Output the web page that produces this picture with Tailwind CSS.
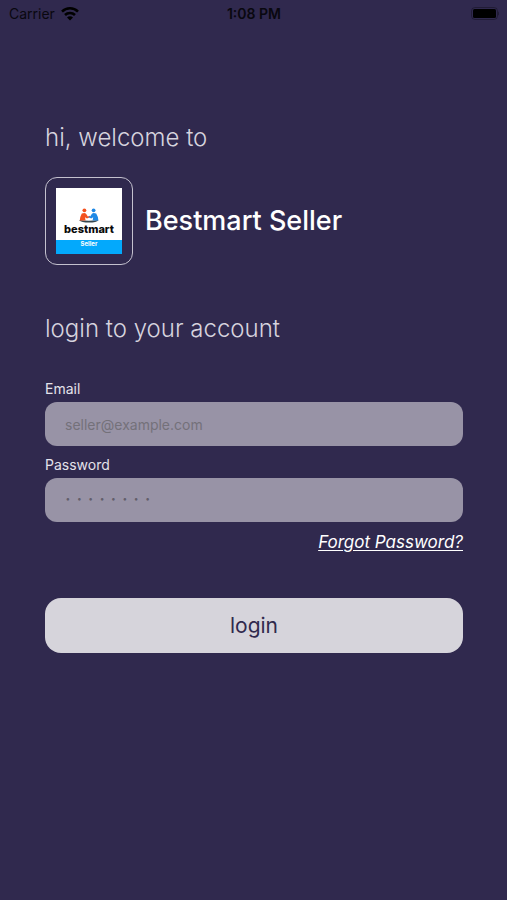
<!DOCTYPE html>
<html lang="en">
<head>
    <meta charset="UTF-8">
    <meta name="viewport" content="width=device-width, initial-scale=1.0">
    <title>Login - Bestmart Seller</title>
    <script src="https://cdn.jsdelivr.net/npm/@tailwindcss/browser@4"></script>
</head>
<body class="bg-[#30294e] min-h-screen font-['Inter',sans-serif]">
    <!-- Status bar -->
    <header class="grid grid-cols-3 items-center h-7 pl-[9px] pr-2 text-sm text-black">
        <div class="flex items-center gap-[6px]">
            <span class="opacity-80">Carrier</span>
            <svg class="w-[18px] h-[14px]" viewBox="0 0 18 14" fill="none" stroke="currentColor" stroke-width="2.6" aria-hidden="true">
                <path d="M1 4.6a11.4 11.4 0 0 1 16 0" />
                <path d="M4 8a7.2 7.2 0 0 1 10 0" />
                <path d="M9 13.4 6 10.4a4.2 4.2 0 0 1 6 0z" fill="currentColor" stroke="none" />
            </svg>
        </div>
        <span class="text-center font-semibold opacity-80">1:08 PM</span>
        <svg class="w-7 h-[14px] justify-self-end" viewBox="0 0 28 14" aria-hidden="true">
            <rect x="0.5" y="0.5" width="26" height="12" rx="3.5" fill="none" stroke="#000" stroke-opacity="0.3" />
            <rect x="2" y="2" width="23" height="9" rx="1.5" fill="#000" />
            <path d="M27 4.5a2.2 2.2 0 0 1 0 4z" fill="#000" fill-opacity="0.3" />
        </svg>
    </header>

    <main class="pl-[45px] pr-11 pt-[94px]">
        <p class="text-2xl font-light text-[#d6d3de]">hi, welcome to</p>

        <div class="flex items-center gap-3 mt-[23px]">
            <div class="size-[88px] shrink-0 p-[10px] border border-[#c4c1ce] rounded-xl">
                <svg class="size-[66px]" viewBox="0 0 66 66" role="img" aria-label="Bestmart Seller logo">
                    <rect width="66" height="66" fill="#fff" />
                    <rect y="52" width="66" height="14" fill="#03a9fc" />
                    <path d="M23 32q10 1.500 19.500 0-2 2.600-9.500 2.600T23 32z" fill="#37474f" />
                    <circle cx="28.400" cy="22.300" r="1.900" fill="#f4511e" />
                    <path d="M25.800 25.600q3-1.600 4.400.4l1.600 2.400 2.200-.6.400 1.200-3.400 1.600-2-1.400.6 3.400h-5.800q.2-4 2-7z" fill="#f4511e" />
                    <circle cx="37.600" cy="22.300" r="1.900" fill="#1e88e5" />
                    <path d="M40.200 25.600q-3-1.600-4.400.4l-1.600 2.400-1.400-.2-.2 1 2.600 1.400 2-1.400-.6 3.400h5.800q-.2-4-2.200-7z" fill="#1e88e5" />
                    <text x="33" y="45" text-anchor="middle" class="text-[11px] font-extrabold" fill="#0a0a0a">bestmart</text>
                    <text x="33" y="58" text-anchor="middle" class="text-[6px] font-bold" fill="#fff">Seller</text>
                </svg>
            </div>
            <h1 class="text-[27px] leading-8 font-medium text-white">Bestmart Seller</h1>
        </div>

        <h2 class="mt-12 text-2xl font-light text-[#d6d3de]">login to your account</h2>

        <form id="login-form" class="mt-8">
            <label for="email" class="block text-sm leading-6 text-[#e4e2ea]">Email</label>
            <input type="email" id="email" name="email" required
                class="block mt-px w-full h-11 px-5 rounded-xl bg-[#9893a6] text-sm text-[#30294d] placeholder:text-[#74717a] focus:outline-none focus:ring-2 focus:ring-white/60"
                placeholder="seller@example.com">

            <label for="password" class="block mt-[7px] text-sm leading-6 text-[#e4e2ea]">Password</label>
            <input type="password" id="password" name="password" required
                class="block mt-px w-full h-11 px-5 rounded-xl bg-[#9893a6] text-sm text-[#30294d] placeholder:text-xl placeholder:text-[#625e6b] focus:outline-none focus:ring-2 focus:ring-white/60"
                placeholder="· · · · · · · ·">

            <div class="mt-2 text-right">
                <a href="#" class="inline-block text-[17px] leading-6 italic text-white underline underline-offset-2">Forgot Password?</a>
            </div>

            <button type="submit" id="login-button"
                class="block mt-11 w-full h-[55px] rounded-2xl bg-[#d6d4db] text-[21px] text-[#30294d] hover:bg-white focus:outline-none focus:ring-2 focus:ring-white/60">
                login
            </button>
        </form>
    </main>
</body>
</html>
